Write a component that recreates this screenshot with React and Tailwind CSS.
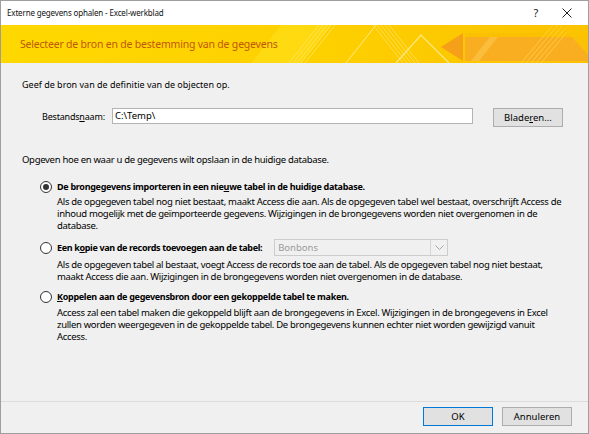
import React from 'react';

// Banner artwork behind the header text
const BannerArt = () => (
  <svg className="absolute inset-0" width="587" height="38" viewBox="0 0 587 38">
    <defs>
      <linearGradient id="bannerBg" x1="0" y1="0" x2="1" y2="0">
        <stop offset="0" stopColor="#ffd800" />
        <stop offset="0.55" stopColor="#fdd000" />
        <stop offset="1" stopColor="#fbc100" />
      </linearGradient>
    </defs>
    <rect width="587" height="38" fill="url(#bannerBg)" />
    <polygon points="250,38 280,0 330,0 300,38" fill="#ffdf1a" opacity="0.6" />
    {[0, 4, 8, 12, 16].map((d) => (
      <line key={'a' + d} x1={288 + d} y1="38" x2={318 + d} y2="0" stroke="#ffe566" strokeWidth="0.8" />
    ))}
    <line x1="345" y1="38" x2="375" y2="0" stroke="#ffe98a" strokeWidth="1" />
    {[0, 4, 8, 12, 16].map((d) => (
      <line key={'b' + d} x1={372 + d} y1="0" x2={402 + d} y2="38" stroke="#ffe066" strokeWidth="0.8" />
    ))}
    <polyline points="395,38 420,10 448,38" fill="none" stroke="#ffe98a" strokeWidth="1.2" />
    <polygon points="440,22 462,8 462,36" fill="#f6a01a" />
    <rect x="464" y="8" width="123" height="28" fill="#f9ae22" />
    <polygon points="470,36 492,8 500,8 478,36" fill="#fbbd3c" />
    <rect x="464" y="8" width="123" height="4" fill="#fbc100" />
    {[0, 5, 10, 15, 20].map((d) => (
      <line key={'c' + d} x1={520 + d} y1="38" x2={552 + d} y2="0" stroke="#ffd24a" strokeWidth="0.8" />
    ))}
    <polygon points="560,0 587,0 587,30" fill="#fcc400" opacity="0.8" />
  </svg>
);

const Radio = ({ checked }) => (
  <span className="w-[12px] h-[12px] rounded-full border border-[#333] bg-white flex items-center justify-center shrink-0">
    {checked && <span className="w-[6px] h-[6px] rounded-full bg-[#333]" />}
  </span>
);

const App = () => {
  return (
    <div className="w-[589px] h-[434px] flex flex-col border border-[#9e9e9e] bg-[#f0f0f0] text-[10px] leading-[12px] text-black font-['Noto_Sans',sans-serif] overflow-hidden">

      {/* Title bar */}
      <div className="h-[24px] shrink-0 bg-white flex items-center pl-[6px]">
        <span className="flex-1 text-[8px] tracking-[-0.15px] text-[#111]">Externe gegevens ophalen - Excel-werkblad</span>
        <span className="w-[12px] text-center text-[11px] text-[#222] mr-[20px]">?</span>
        <svg className="mr-[16px]" width="10" height="10" viewBox="0 0 10 10">
          <path d="M0.5 0.5 L9.5 9.5 M9.5 0.5 L0.5 9.5" stroke="#222" strokeWidth="1" />
        </svg>
      </div>

      {/* Header banner */}
      <div className="relative h-[38px] shrink-0 flex items-center">
        <BannerArt />
        <span className="relative pl-[19px] text-[10.5px] tracking-[-0.2px] text-[#c1570a]">
          Selecteer de bron en de bestemming van de gegevens
        </span>
      </div>

      {/* Body */}
      <div className="flex-1 flex flex-col px-[21px] pt-[16px]">
        <p className="text-[9px]">Geef de bron van de definitie van de objecten op.</p>

        <div className="flex items-start mt-[17px] ml-[20px]">
          <span className="w-[70px] mt-[3px] text-[9px] tracking-[-0.2px]">
            Bestands<span className="underline">n</span>aam:
          </span>
          <div className="w-[361px] h-[16px] bg-white border border-[#b4b4b4] flex items-center px-[2px] text-[9.5px]">
            C:\Temp\
          </div>
          <button className="ml-[20px] w-[70px] h-[19px] bg-[#e1e1e1] border border-[#adadad] text-[9.5px]">
            Blade<span className="underline">r</span>en...
          </button>
        </div>

        <p className="mt-[27px] text-[9.5px] tracking-[-0.3px]">Opgeven hoe en waar u de gegevens wilt opslaan in de huidige database.</p>

        {/* Option 1 */}
        <div className="flex items-center mt-[15px] ml-[18px] gap-[5px]">
          <Radio checked />
          <span className="font-bold text-[9px] tracking-[-0.3px]">
            De brongegevens importeren in een nie<span className="underline">u</span>we tabel in de huidige database.
          </span>
        </div>
        <p className="ml-[35px] mt-[3px] whitespace-nowrap text-[9.5px] tracking-[-0.32px]">
          Als de opgegeven tabel nog niet bestaat, maakt Access die aan. Als de opgegeven tabel wel bestaat, overschrijft Access de<br />
          inhoud mogelijk met de geïmporteerde gegevens. Wijzigingen in de brongegevens worden niet overgenomen in de<br />
          database.
        </p>

        {/* Option 2 */}
        <div className="flex items-center mt-[7px] ml-[18px] gap-[5px]">
          <Radio />
          <span className="font-bold text-[9px] tracking-[-0.35px]">
            Een k<span className="underline">o</span>pie van de records toevoegen aan de tabel:
          </span>
          <div className="ml-[7px] w-[174px] h-[17px] bg-[#f0f0f0] border border-[#cccccc] flex items-center">
            <span className="flex-1 pl-[3px] text-[9.5px] text-[#9a9a9a]">Bonbons</span>
            <span className="w-[17px] h-full border-l border-[#d6d6d6] flex items-center justify-center">
              <svg width="9" height="5" viewBox="0 0 9 5">
                <path d="M0.5 0.5 L4.5 4.5 L8.5 0.5" fill="none" stroke="#a6a6a6" strokeWidth="1" />
              </svg>
            </span>
          </div>
        </div>
        <p className="ml-[35px] mt-[3px] whitespace-nowrap text-[9.5px] tracking-[-0.32px]">
          Als de opgegeven tabel al bestaat, voegt Access de records toe aan de tabel. Als de opgegeven tabel nog niet bestaat,<br />
          maakt Access die aan. Wijzigingen in de brongegevens worden niet overgenomen in de database.
        </p>

        {/* Option 3 */}
        <div className="flex items-center mt-[8px] ml-[18px] gap-[5px]">
          <Radio />
          <span className="font-bold text-[9px] tracking-[-0.3px]">
            <span className="underline">K</span>oppelen aan de gegevensbron door een gekoppelde tabel te maken.
          </span>
        </div>
        <p className="ml-[35px] mt-[4px] whitespace-nowrap text-[9.5px] tracking-[-0.32px]">
          Access zal een tabel maken die gekoppeld blijft aan de brongegevens in Excel. Wijzigingen in de brongegevens in Excel<br />
          zullen worden weergegeven in de gekoppelde tabel. De brongegevens kunnen echter niet worden gewijzigd vanuit<br />
          Access.
        </p>
      </div>

      {/* Footer */}
      <div className="h-[32px] shrink-0 border-t border-[#dcdcdc] flex justify-end items-start pt-[5px] pr-[16px] gap-[9px]">
        <button className="w-[70px] h-[19px] bg-[#e1e1e1] border border-[#0078d7] text-[9.5px]">OK</button>
        <button className="w-[70px] h-[19px] bg-[#e1e1e1] border border-[#adadad] text-[9.5px]">Annuleren</button>
      </div>
    </div>
  );
};

export default App;
